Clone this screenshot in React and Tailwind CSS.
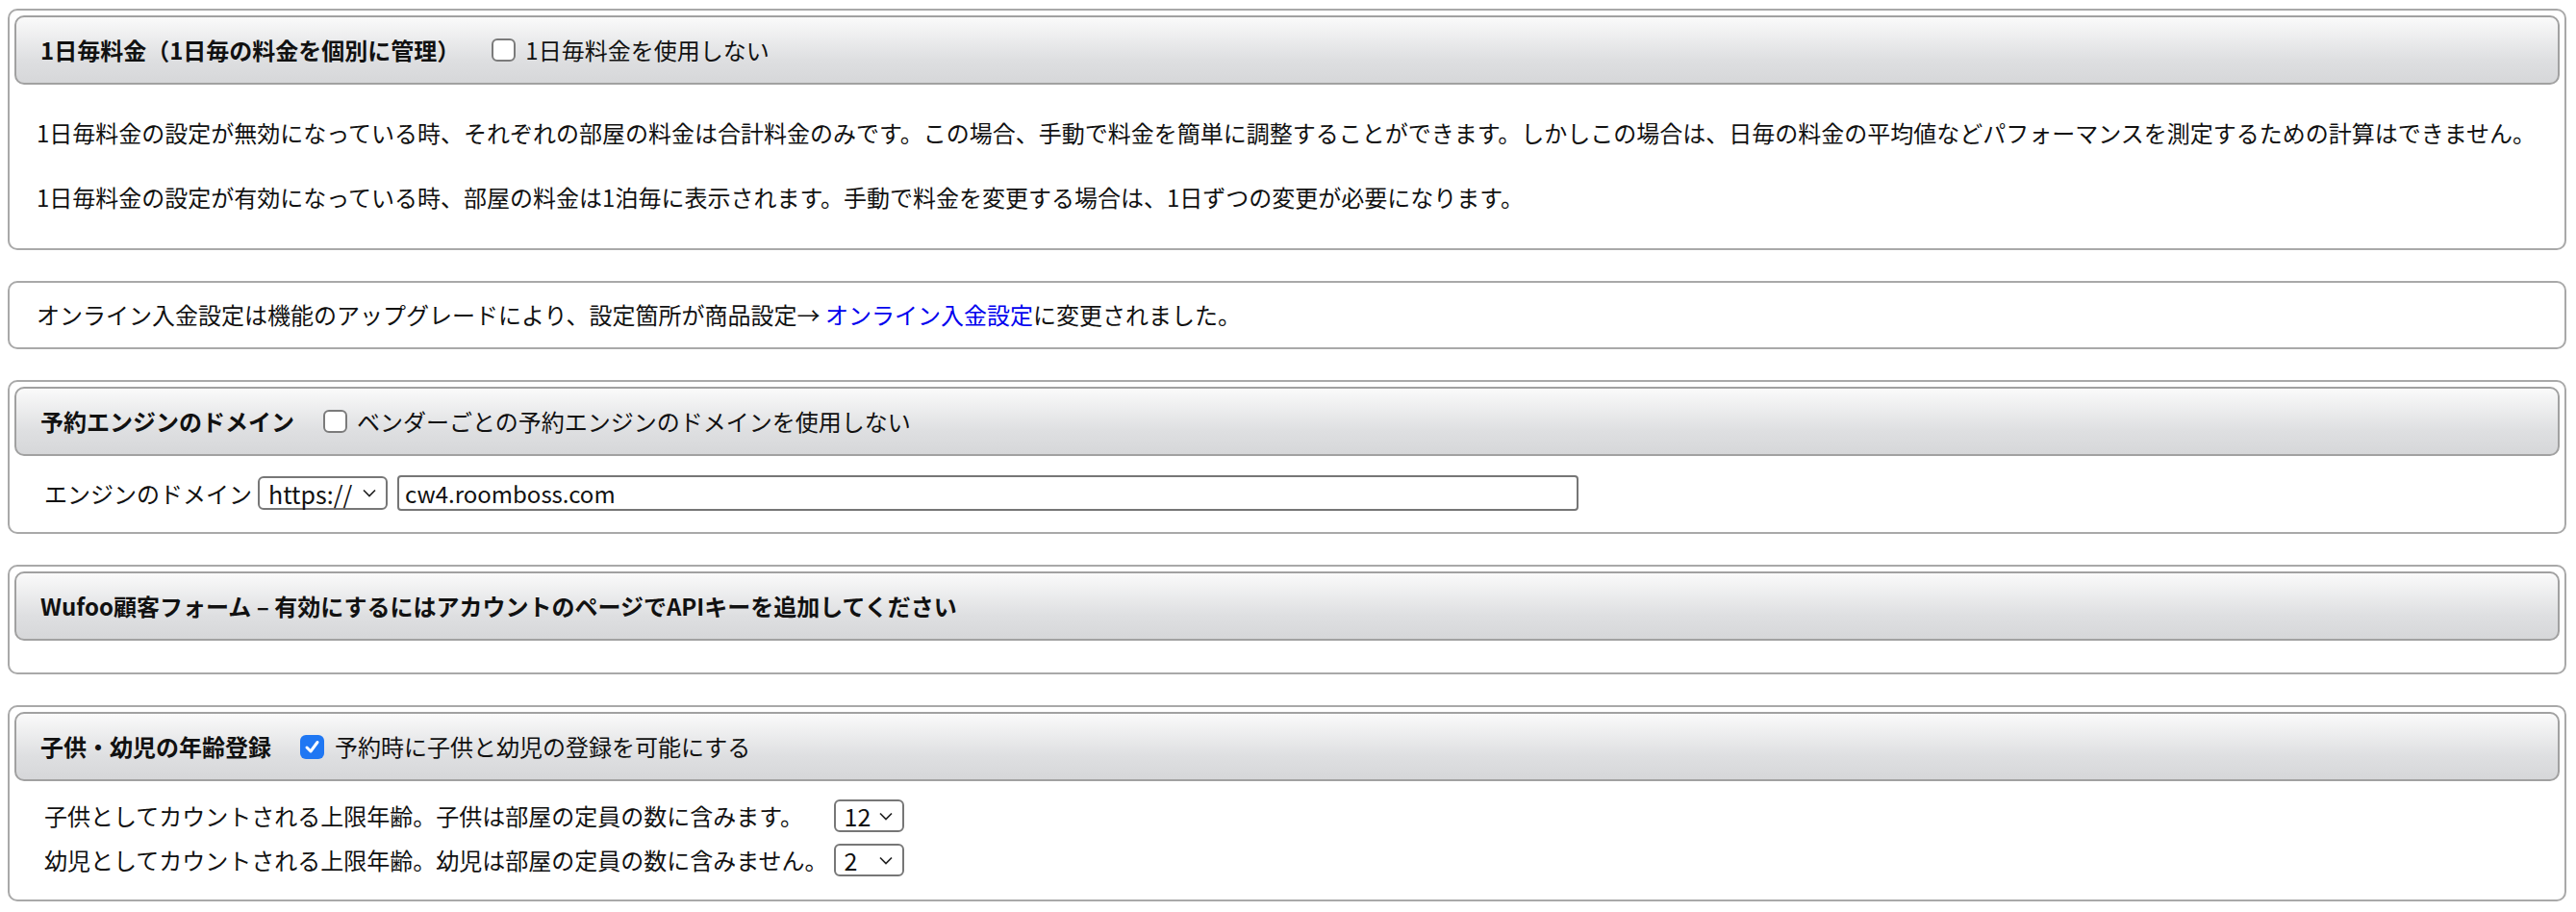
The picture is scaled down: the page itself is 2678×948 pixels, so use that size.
import React from "react";

const Box = ({ children, className = "" }) => (
  <div className={"border-2 border-[#a9a9a9] rounded-[10px] p-[5px] bg-white " + className}>
    {children}
  </div>
);

const Header = ({ children }) => (
  <div className="h-[72px] border-2 border-[#a1a1a1] rounded-[10px] bg-linear-to-b from-[#fafafa] via-[#dedfe1] via-65% to-[#d6d7d9] flex items-center pl-[25px]">
    {children}
  </div>
);

const Title = ({ children }) => (
  <span className="font-bold text-[24px] leading-[36px] text-[#111]">{children}</span>
);

const Unchecked = () => (
  <span className="inline-block w-[25px] h-[24px] border-2 border-[#7b7b7b] rounded-[6px] bg-white shrink-0" />
);

const Checked = () => (
  <span className="inline-flex items-center justify-center w-[25px] h-[25px] rounded-[6px] bg-[#1f77f3] shrink-0">
    <svg width="17" height="17" viewBox="0 0 17 17">
      <polyline points="3,9 7,13 14,3.5" fill="none" stroke="#fff" strokeWidth="3" strokeLinecap="round" strokeLinejoin="round" />
    </svg>
  </span>
);

const Chevron = () => (
  <svg width="14" height="9" viewBox="0 0 14 9" className="shrink-0">
    <polyline points="1,1.5 7,7.5 13,1.5" fill="none" stroke="#222" strokeWidth="1.7" />
  </svg>
);

const FakeSelect = ({ value, w, h }) => (
  <div className={"flex items-center justify-between border-2 border-[#777] rounded-[6px] bg-white pl-[9px] pr-[10px] " + w + " " + h}>
    <span className="text-[25px] leading-[30px] text-[#111]">{value}</span>
    <Chevron />
  </div>
);

export default function App() {
  return (
    <div className="w-[2678px] min-h-[948px] bg-white pt-[9px] pl-[8px] pr-[10px] flex flex-col gap-[32px] font-['Noto_Sans_CJK_JP','Noto_Sans',sans-serif] text-[24px] leading-[36px] text-[#111]">
      <Box>
        <Header>
          <Title>1日毎料金（1日毎の料金を個別に管理）</Title>
          <label className="flex items-center gap-[10px] ml-[33px]">
            <Unchecked />
            <span>1日毎料金を使用しない</span>
          </label>
        </Header>
        <div className="pl-[23px] pt-[32px] pb-[30px] flex flex-col gap-[31px]">
          <p>1日毎料金の設定が無効になっている時、それぞれの部屋の料金は合計料金のみです。この場合、手動で料金を簡単に調整することができます。しかしこの場合は、日毎の料金の平均値などパフォーマンスを測定するための計算はできません。</p>
          <p>1日毎料金の設定が有効になっている時、部屋の料金は1泊毎に表示されます。手動で料金を変更する場合は、1日ずつの変更が必要になります。</p>
        </div>
      </Box>

      <div className="border-2 border-[#a9a9a9] rounded-[10px] bg-white pl-[28px] pt-[15px] pb-[16px]">
        <p>
          オンライン入金設定は機能のアップグレードにより、設定箇所が商品設定→ <span className="text-[#0000ee]">オンライン入金設定</span>に変更されました。
        </p>
      </div>

      <Box>
        <Header>
          <Title>予約エンジンのドメイン</Title>
          <label className="flex items-center gap-[10px] ml-[30px]">
            <Unchecked />
            <span>ベンダーごとの予約エンジンのドメインを使用しない</span>
          </label>
        </Header>
        <div className="flex items-center pl-[31px] pt-[20px] pb-[17px]">
          <span>エンジンのドメイン</span>
          <div className="ml-[6px]">
            <FakeSelect value="https://" w="w-[135px]" h="h-[35px]" />
          </div>
          <input
            type="text"
            defaultValue="cw4.roomboss.com"
            className="ml-[10px] w-[1228px] h-[37px] border-2 border-[#767676] rounded-[4px] px-[6px] text-[24px] leading-[30px] text-[#111] bg-white outline-none font-['Noto_Sans_CJK_JP','Noto_Sans',sans-serif]"
          />
        </div>
      </Box>

      <Box>
        <Header>
          <Title>Wufoo顧客フォーム – 有効にするにはアカウントのページでAPIキーを追加してください</Title>
        </Header>
        <div className="h-[28px]" />
      </Box>

      <Box>
        <Header>
          <Title>子供・幼児の年齢登録</Title>
          <label className="flex items-center gap-[11px] ml-[30px]">
            <Checked />
            <span>予約時に子供と幼児の登録を可能にする</span>
          </label>
        </Header>
        <div className="pl-[31px] pt-[18px] pb-[18px] grid grid-cols-[max-content_max-content] gap-x-[6px] gap-y-[10px] items-center">
          <span>子供としてカウントされる上限年齢。子供は部屋の定員の数に含みます。</span>
          <FakeSelect value="12" w="w-[73px]" h="h-[34px]" />
          <span>幼児としてカウントされる上限年齢。幼児は部屋の定員の数に含みません。</span>
          <FakeSelect value="2" w="w-[73px]" h="h-[34px]" />
        </div>
      </Box>
    </div>
  );
}
